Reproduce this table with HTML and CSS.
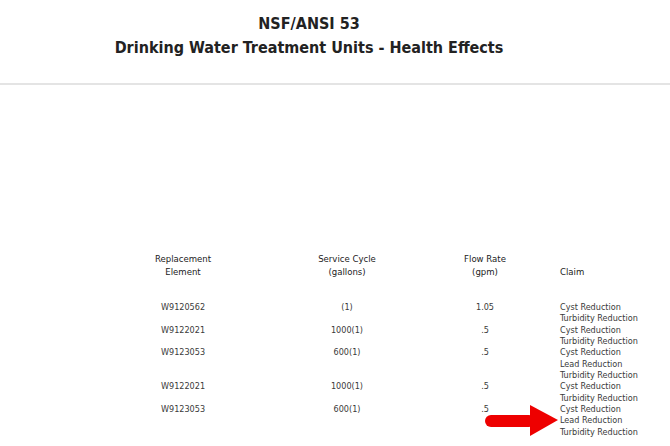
FILE: index.html
```html
<!DOCTYPE html>
<html>
<head>
<meta charset="utf-8">
<link rel="stylesheet" href="styles.css">
</head>
<body>
<div class="page">
  <header class="head">
    <h1 class="title">NSF/ANSI 53<br>Drinking Water Treatment Units - Health Effects</h1>
  </header>
  <div class="rule"></div>
  <div class="table">
    <div class="th">Replacement<br>Element</div>
    <div class="th">Service Cycle<br>(gallons)</div>
    <div class="th">Flow Rate<br>(gpm)</div>
    <div class="th th-claim"><br>Claim</div>

    <div class="td c1">W9120562</div>
    <div class="td c2">(1)</div>
    <div class="td c3">1.05</div>
    <div class="td c4">Cyst Reduction<br>Turbidity Reduction</div>

    <div class="td c1">W9122021</div>
    <div class="td c2">1000(1)</div>
    <div class="td c3">.5</div>
    <div class="td c4">Cyst Reduction<br>Turbidity Reduction</div>

    <div class="td c1">W9123053</div>
    <div class="td c2">600(1)</div>
    <div class="td c3">.5</div>
    <div class="td c4">Cyst Reduction<br>Lead Reduction<br>Turbidity Reduction</div>

    <div class="td c1">W9122021</div>
    <div class="td c2">1000(1)</div>
    <div class="td c3">.5</div>
    <div class="td c4">Cyst Reduction<br>Turbidity Reduction</div>

    <div class="td c1">W9123053</div>
    <div class="td c2">600(1)</div>
    <div class="td c3">.5</div>
    <div class="td c4">Cyst Reduction<br>Lead Reduction<br>Turbidity Reduction</div>
  </div>
  <svg class="arrow" width="76" height="34" viewBox="0 0 76 34">
    <rect x="1" y="11" width="50" height="12" rx="6" fill="#ee0000"/>
    <polygon points="46,1 74,16 46,32" fill="#ee0000"/>
  </svg>
</div>
</body>
</html>
```

FILE: styles.css
```css
html, body {
  margin: 0;
  padding: 0;
  background: #ffffff;
}
.page {
  position: relative;
  width: 670px;
  height: 446px;
  overflow: hidden;
  font-family: "DejaVu Sans Condensed", "DejaVu Sans", sans-serif;
}
.head {
  padding-top: 12px;
  text-align: center;
  width: 618px;
}
.title {
  margin: 0;
  font-size: 16px;
  line-height: 24px;
  font-weight: bold;
  color: #222222;
}
.rule {
  margin-top: 23px;
  height: 0;
  border-top: 2px solid #e4e4e4;
}
.table {
  margin-top: 167px;
  margin-left: 118px;
  display: grid;
  grid-template-columns: 130px 198px 78px auto;
  color: #3a3a3a;
}
.th {
  font-size: 9.5px;
  line-height: 13px;
  text-align: center;
  padding-bottom: 24px;
  color: #222222;
}
.th-claim {
  text-align: left;
  padding-left: 36px;
}
.td {
  font-size: 9px;
  line-height: 11.35px;
  text-align: center;
}
.c4 {
  text-align: left;
  padding-left: 36px;
}
.arrow {
  position: absolute;
  left: 484px;
  top: 404px;
}
```
